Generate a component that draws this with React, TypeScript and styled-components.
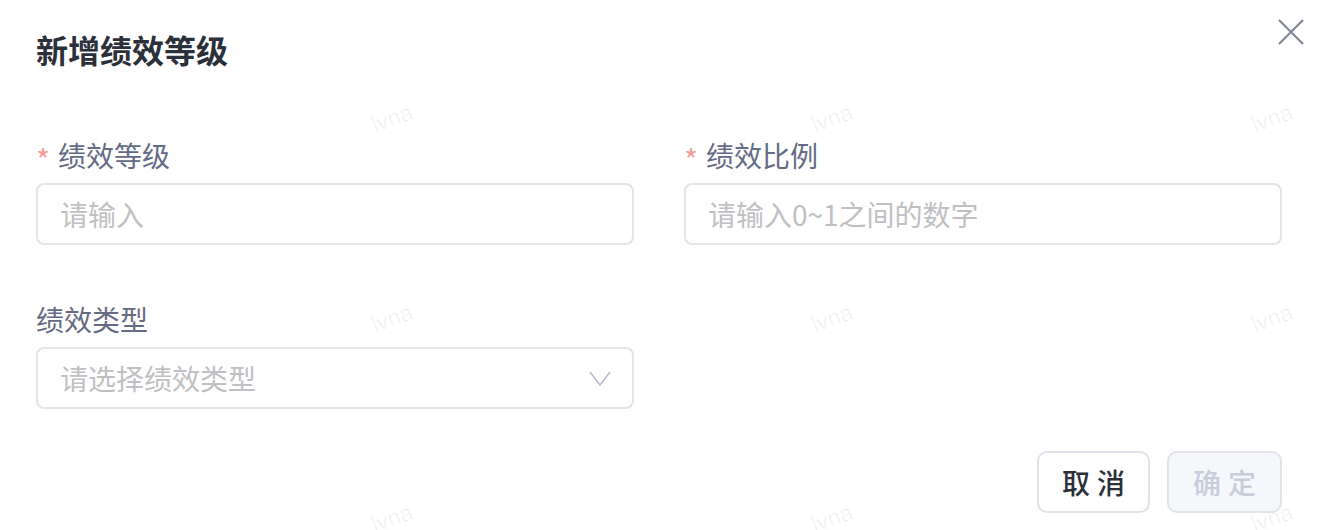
import styled, { createGlobalStyle } from "styled-components";

const GlobalStyle = createGlobalStyle`
  html, body {
    margin: 0;
    padding: 0;
    background: #ffffff;
  }
  body {
    font-family: "Noto Sans CJK SC", "Noto Sans", sans-serif;
  }
  * {
    box-sizing: border-box;
  }
`;

const watermarks = Array.from({ length: 9 }, (_, i) => i);

export default function App() {
  return (
    <>
      <GlobalStyle />
      <Dialog>
        <Header>
          <Title>新增绩效等级</Title>
          <CloseButton aria-label="关闭">
            <svg width="26" height="26" viewBox="0 0 26 26">
              <path d="M1 1L25 25M25 1L1 25" stroke="#7f8497" strokeWidth="2" />
            </svg>
          </CloseButton>
        </Header>

        <Form>
          <Field>
            <Label>
              <Star>*</Star>绩效等级
            </Label>
            <Input placeholder="请输入" />
          </Field>
          <Field>
            <Label>
              <Star>*</Star>绩效比例
            </Label>
            <Input placeholder="请输入0~1之间的数字" />
          </Field>
          <Field>
            <Label>绩效类型</Label>
            <Select>
              <span>请选择绩效类型</span>
              <svg width="22" height="16" viewBox="0 0 22 16">
                <polyline
                  points="1,2 11,15 21,2"
                  fill="none"
                  stroke="#b9bdca"
                  strokeWidth="1.6"
                />
              </svg>
            </Select>
          </Field>
        </Form>

        <Footer>
          <Button>取消</Button>
          <Button $primary disabled>
            确定
          </Button>
        </Footer>

        <Watermark>
          {watermarks.map((i) => (
            <Mark key={i}>lvna</Mark>
          ))}
        </Watermark>
      </Dialog>
    </>
  );
}

const Dialog = styled.div`
  position: relative;
  width: 1332px;
  height: 530px;
  padding: 26px 50px 0 36px;
  overflow: hidden;
  background: #ffffff;
`;

const Header = styled.div`
  display: flex;
  justify-content: space-between;
  align-items: flex-start;
  height: 46px;
`;

const Title = styled.h1`
  margin: 0;
  font-size: 32px;
  line-height: 46px;
  font-weight: 700;
  color: #2b303b;
`;

const CloseButton = styled.button`
  margin: -7px -22px 0 0;
  padding: 0;
  border: none;
  background: transparent;
  width: 26px;
  height: 26px;
  cursor: pointer;

  svg {
    display: block;
  }
`;

const Form = styled.div`
  display: grid;
  grid-template-columns: 598px 598px;
  column-gap: 50px;
  row-gap: 54px;
  margin-top: 63px;
`;

const Field = styled.div`
  display: flex;
  flex-direction: column;
`;

const Label = styled.label`
  display: flex;
  align-items: center;
  height: 40px;
  margin-bottom: 8px;
  font-size: 28px;
  color: #656b84;
`;

const Star = styled.span`
  color: #f2a298;
  font-size: 30px;
  margin-right: 8px;
  padding-top: 8px;
`;

const Input = styled.input`
  width: 100%;
  height: 62px;
  padding: 0 22px;
  border: 2px solid #e4e5eb;
  border-radius: 8px;
  font-family: "Noto Sans CJK SC", "Noto Sans", sans-serif;
  font-size: 28px;
  color: #2b303b;
  outline: none;
  background: #ffffff;

  &::placeholder {
    color: #bfc0c3;
  }
`;

const Select = styled.div`
  display: flex;
  align-items: center;
  justify-content: space-between;
  height: 62px;
  padding: 0 21px 0 22px;
  border: 2px solid #e4e5eb;
  border-radius: 8px;
  font-size: 28px;
  color: #bfc0c3;
  cursor: pointer;

  svg {
    display: block;
  }
`;

const Footer = styled.div`
  display: flex;
  justify-content: flex-end;
  gap: 17px;
  margin-top: 42px;
`;

const Button = styled.button<{ $primary?: boolean }>`
  height: 62px;
  width: ${(p) => (p.$primary ? "115px" : "113px")};
  border: 2px solid #e2e3ea;
  border-radius: 10px;
  font-family: "Noto Sans CJK SC", "Noto Sans", sans-serif;
  font-size: 28px;
  font-weight: 500;
  letter-spacing: 7px;
  padding: 0 0 0 7px;
  background: ${(p) => (p.$primary ? "#f5f7fb" : "#ffffff")};
  color: ${(p) => (p.$primary ? "#c8cdda" : "#2b303b")};
  cursor: ${(p) => (p.$primary ? "not-allowed" : "pointer")};
`;

const Watermark = styled.div`
  position: absolute;
  inset: 0;
  padding: 18px 0 0 172px;
  display: grid;
  grid-template-columns: repeat(3, 440px);
  grid-auto-rows: 200px;
  pointer-events: none;
`;

const Mark = styled.span`
  display: flex;
  align-items: center;
  justify-content: center;
  font-family: "Liberation Sans", Arial, sans-serif;
  font-size: 23px;
  color: rgba(0, 0, 0, 0.06);
  transform: rotate(-20deg);
`;
